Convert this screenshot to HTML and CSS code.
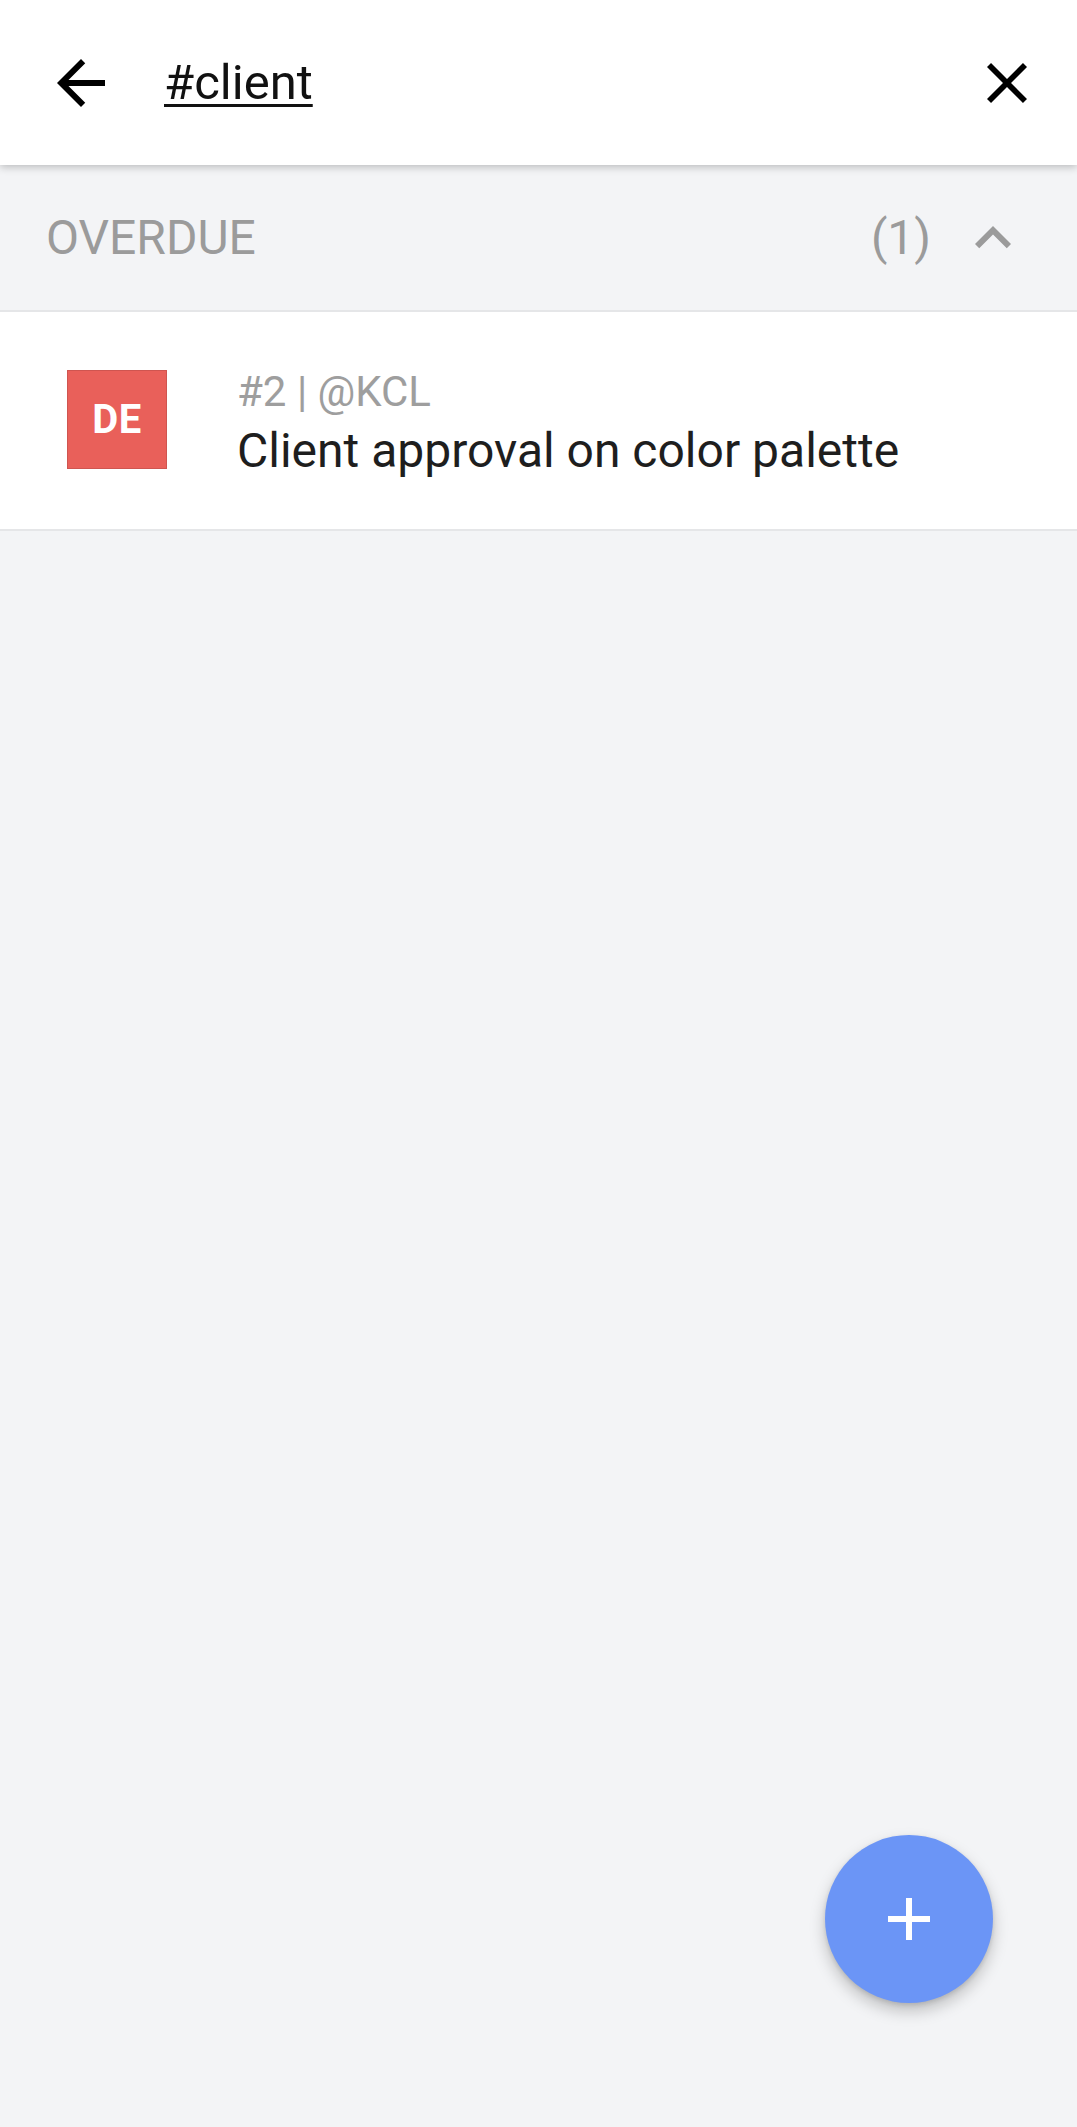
FILE: index.html
```html
<!DOCTYPE html>
<html lang="en">
<head>
<meta charset="utf-8">
<title>#client</title>
<link rel="stylesheet" href="styles.css">
</head>
<body>
<div class="app">
  <header class="topbar">
    <svg class="icon-back" viewBox="4 4 16 16" aria-hidden="true"><path d="M20 11H7.83l5.59-5.59L12 4l-8 8 8 8 1.41-1.41L7.83 13H20v-2z"/></svg>
    <span class="query">#client</span>
    <svg class="icon-close" viewBox="5 5 14 14" aria-hidden="true"><path d="M19 6.41L17.590 5 12 10.59 6.41 5 5 6.41 10.59 12 5 17.59 6.41 19 12 13.41 17.59 19 19 17.59 13.41 12z"/></svg>
  </header>

  <section class="group">
    <div class="group-head">
      <span class="group-title">OVERDUE</span>
      <span class="group-count">(1)</span>
      <svg class="icon-chevron" viewBox="0 0 24 24" aria-hidden="true"><path d="M12 8l-6 6 1.41 1.41L12 10.83l4.59 4.58L18 14z"/></svg>
    </div>
    <div class="task">
      <div class="avatar">DE</div>
      <div class="task-text">
        <div class="task-meta">#2 | @KCL</div>
        <div class="task-title">Client approval on color palette</div>
      </div>
    </div>
  </section>

  <button class="fab" aria-label="Add">
    <svg viewBox="5 5 14 14" aria-hidden="true"><path d="M19 13h-6v6h-2v-6H5v-2h6V5h2v6h6v2z"/></svg>
  </button>
</div>
</body>
</html>
```

FILE: styles.css
```css
* { box-sizing: border-box; }

html, body {
  margin: 0;
  padding: 0;
  background: #f3f4f6;
  font-family: Roboto, "Noto Sans", "Liberation Sans", sans-serif;
}

.app {
  min-height: 2127px;
  background: #f3f4f6;
}

.topbar {
  position: relative;
  z-index: 2;
  height: 165px;
  background: #ffffff;
  display: flex;
  align-items: center;
  padding: 0 38px 0 57px;
  box-shadow: 0 2px 8px rgba(0, 0, 0, 0.24);
}

.icon-back {
  width: 48px;
  height: 48px;
  fill: #000;
  flex: none;
}

.query {
  margin-left: 59px;
  font-size: 49px;
  line-height: 56px;
  color: #111;
  text-decoration: underline;
  text-decoration-thickness: 3px;
  text-underline-offset: 5px;
  flex: 1;
}

.icon-close {
  width: 40px;
  height: 40px;
  fill: #000;
  flex: none;
  margin-right: 12px;
}

.group-head {
  height: 147px;
  display: flex;
  align-items: center;
  padding: 0 48px 0 46px;
  border-bottom: 2px solid #e5e6e8;
  color: #9b9b9b;
}

.group-title {
  flex: 1;
  font-size: 48px;
  line-height: 56px;
}

.group-count {
  font-size: 48px;
  line-height: 56px;
}

.icon-chevron {
  width: 72px;
  height: 72px;
  fill: #9b9b9b;
  margin-left: 26px;
}

.task {
  background: #ffffff;
  display: flex;
  align-items: flex-start;
  padding: 55px 40px 50px 67px;
  border-bottom: 2px solid #e5e6e8;
}

.avatar {
  flex: none;
  width: 100px;
  height: 99px;
  margin-top: 3px;
  background: #e9605a;
  border: 1px solid #cf5550;
  color: #ffffff;
  font-weight: 700;
  font-size: 40px;
  display: flex;
  align-items: center;
  justify-content: center;
  letter-spacing: 0.5px;
}

.task-text {
  margin-left: 70px;
  display: flex;
  flex-direction: column;
  gap: 7px;
}

.task-meta {
  font-size: 42px;
  line-height: 49px;
  color: #9e9e9e;
}

.task-title {
  font-size: 48px;
  line-height: 56px;
  color: #1e1e1e;
}

.fab {
  position: fixed;
  right: 84px;
  bottom: 124px;
  width: 168px;
  height: 168px;
  border-radius: 50%;
  border: none;
  padding: 0;
  background: #6b95f6;
  box-shadow: 0 8px 16px rgba(0, 0, 0, 0.22), 0 2px 5px rgba(0, 0, 0, 0.12);
  display: flex;
  align-items: center;
  justify-content: center;
}

.fab svg {
  width: 42px;
  height: 42px;
  fill: #ffffff;
}
```
